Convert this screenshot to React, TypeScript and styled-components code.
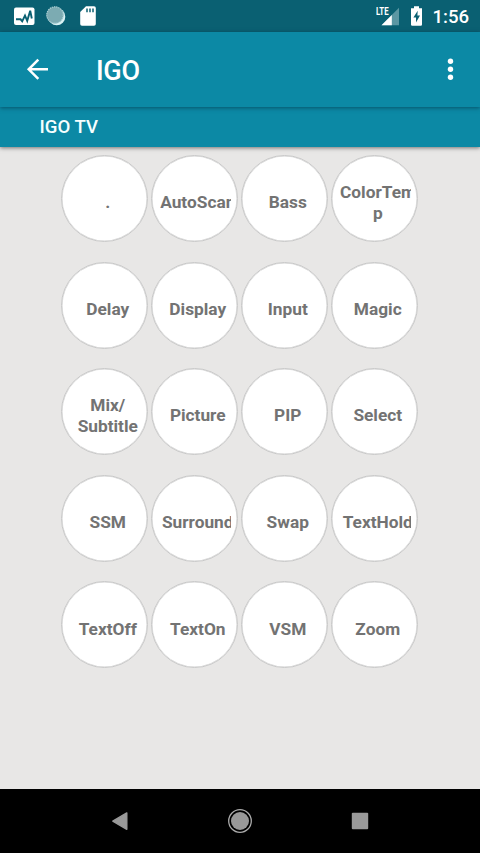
import React from 'react';
import styled, { createGlobalStyle } from 'styled-components';

const GlobalStyle = createGlobalStyle`
  * { box-sizing: border-box; }
  body { margin: 0; font-family: Roboto, "Liberation Sans", sans-serif; background: #e8e7e6; }
`;

const Screen = styled.div`
  width: 480px;
  height: 853px;
  display: flex;
  flex-direction: column;
  background: #e8e7e6;
  overflow: hidden;
`;

const StatusBar = styled.div`
  height: 32px;
  flex: none;
  display: flex;
  justify-content: space-between;
  background: #0a6072;
`;

const StatusIcons = styled.svg`
  display: block;
  height: 32px;
`;

const StatusRight = styled.div`
  display: flex;
`;

const Clock = styled.div`
  width: 49px;
  padding-left: 1.5px;
  font-size: 18.6px;
  font-weight: 500;
  line-height: 34px;
  color: #fff;
  white-space: nowrap;
`;

const AppBar = styled.header`
  height: 75px;
  flex: none;
  display: flex;
  align-items: center;
  background: #0c89a5;
  box-shadow: 0 1px 4px rgba(0, 30, 45, 0.5);
  z-index: 2;
`;

const IconButton = styled.button<{ $width: number }>`
  width: ${(p) => p.$width}px;
  height: 75px;
  padding: 0;
  border: 0;
  background: none;
  svg { display: block; }
`;

const Title = styled.h1`
  flex: 1;
  margin: 0;
  padding-top: 2px;
  font-size: 27px;
  font-weight: 500;
  letter-spacing: -0.3px;
  line-height: 32px;
  color: #fff;
`;

const TabBar = styled.nav`
  height: 40px;
  flex: none;
  padding-left: 39.5px;
  background: #0c89a5;
  box-shadow: 0 1px 4px rgba(0, 0, 0, 0.5);
  color: #f5ffff;
  font-size: 18.6px;
  font-weight: 500;
  line-height: 41px;
  z-index: 1;
`;

const Keypad = styled.main`
  flex: 1;
  display: grid;
  grid-template-columns: repeat(4, 87px);
  grid-auto-rows: 87px;
  column-gap: 3px;
  row-gap: 19.6px;
  padding: 8px 0 0 61px;
`;

const Key = styled.button`
  width: 87px;
  height: 87px;
  padding: 8px 6px 0 8px;
  border: 1px solid #c8c8c8;
  border-radius: 50%;
  background: #fff;
  box-shadow: inset 0 0 0 0.5px #d4d4d4;
  display: flex;
  align-items: center;
  font-family: inherit;
`;

const KeyClip = styled.span`
  width: 71px;
  flex: none;
  overflow: hidden;
`;

const KeyLabel = styled.span`
  display: block;
  width: 75.5px;
  font-size: 17.3px;
  font-weight: 700;
  line-height: 20.5px;
  text-align: center;
  color: #737373;
  white-space: pre;
`;

const NavBar = styled.footer`
  height: 64px;
  flex: none;
  display: flex;
  justify-content: center;
  background: #000;
`;

const NavButton = styled.button`
  width: 120px;
  height: 64px;
  padding: 0;
  border: 0;
  background: none;
  svg { display: block; }
`;

const keys = [
  '.', 'AutoScan', 'Bass', 'ColorTem\np',
  'Delay', 'Display', 'Input', 'Magic',
  'Mix/\nSubtitle', 'Picture', 'PIP', 'Select',
  'SSM', 'Surround', 'Swap', 'TextHold',
  'TextOff', 'TextOn', 'VSM', 'Zoom',
];

const LteLabel = styled.span`
  width: 17px;
  padding-top: 5px;
  font-size: 11.5px;
  line-height: 13px;
  font-weight: 700;
  color: #fff;
  transform: scaleX(0.68);
  transform-origin: left top;
  margin-right: -12px;
`;

export default function App() {
  return (
    <>
      <GlobalStyle />
      <Screen>
        <StatusBar>
          <StatusIcons width="110" viewBox="0 0 110 32">
            <rect x="14" y="7.5" width="20.5" height="17.5" rx="2" fill="#fff" />
            <path d="M16 19.3h4.6l1.6 2 2.8-5.8 2.2 5.3 3-10 1.6 7.7" fill="none" stroke="#0a6072" strokeWidth="1.9" />
            <circle cx="56.7" cy="16.7" r="8.6" fill="#d9f2f4" />
            <circle cx="55" cy="15" r="8.6" fill="#7cabb2" />
            <circle cx="55" cy="15" r="8.2" fill="none" stroke="#a9ced3" strokeWidth="1.2" strokeDasharray="1.2 1" />
            <path d="M86 6.3h8a1.8 1.8 0 0 1 1.8 1.8v15.8a1.8 1.8 0 0 1-1.8 1.8H82a1.8 1.8 0 0 1-1.8-1.8V12z" fill="#fff" />
            <path d="M87 8.5v3.8m3-3.8v3.8m3-3.8v3.8" stroke="#0a6072" strokeWidth="1.5" />
          </StatusIcons>
          <StatusRight>
            <LteLabel>LTE</LteLabel>
            <StatusIcons width="50" viewBox="381 0 50 32">
              <path d="M399 7.8v17.4h-17.5z" fill="#5b97a3" />
              <path d="M391.8 15v10.2h-10.3z" fill="#fff" />
              <path d="M414 6.2h5v2h3v16.3q0 1.2-1.2 1.2h-8.6q-1.2 0-1.2-1.2V8.2h3z" fill="#fff" />
              <path d="M417.7 10.8l-4.3 6.6h2.6v5l4-6.9h-2.6z" fill="#0a6072" />
            </StatusIcons>
            <Clock>1:56</Clock>
          </StatusRight>
        </StatusBar>
        <AppBar>
          <IconButton $width={96} aria-label="Back">
            <svg width="96" height="75" viewBox="0 32 96 75">
              <path d="M48 69.3H28.5M38.3 59.7l-9.6 9.6 9.6 9.6" fill="none" stroke="#fff" strokeWidth="2.5" />
            </svg>
          </IconButton>
          <Title>IGO</Title>
          <IconButton $width={60} aria-label="More options">
            <svg width="60" height="75" viewBox="420 32 60 75" fill="#fff">
              <circle cx="450.5" cy="61.3" r="2.7" />
              <circle cx="450.5" cy="69.3" r="2.7" />
              <circle cx="450.5" cy="77.3" r="2.7" />
            </svg>
          </IconButton>
        </AppBar>
        <TabBar>IGO TV</TabBar>
        <Keypad>
          {keys.map((label) => (
            <Key key={label}>
              <KeyClip>
                <KeyLabel>{label}</KeyLabel>
              </KeyClip>
            </Key>
          ))}
        </Keypad>
        <NavBar>
          <NavButton aria-label="Back">
            <svg width="120" height="64" viewBox="60 789 120 64">
              <path d="M112.8 821.2L126.8 812.9V829.3z" fill="#999" stroke="#999" strokeWidth="1.4" strokeLinejoin="round" />
            </svg>
          </NavButton>
          <NavButton aria-label="Home">
            <svg width="120" height="64" viewBox="180 789 120 64">
              <circle cx="240" cy="821" r="11.3" fill="none" stroke="#aaa" strokeWidth="1.3" />
              <circle cx="240" cy="821" r="9" fill="#999" />
            </svg>
          </NavButton>
          <NavButton aria-label="Overview">
            <svg width="120" height="64" viewBox="300 789 120 64">
              <rect x="351.8" y="812.8" width="16.4" height="16.4" rx="1" fill="#999" />
            </svg>
          </NavButton>
        </NavBar>
      </Screen>
    </>
  );
}
